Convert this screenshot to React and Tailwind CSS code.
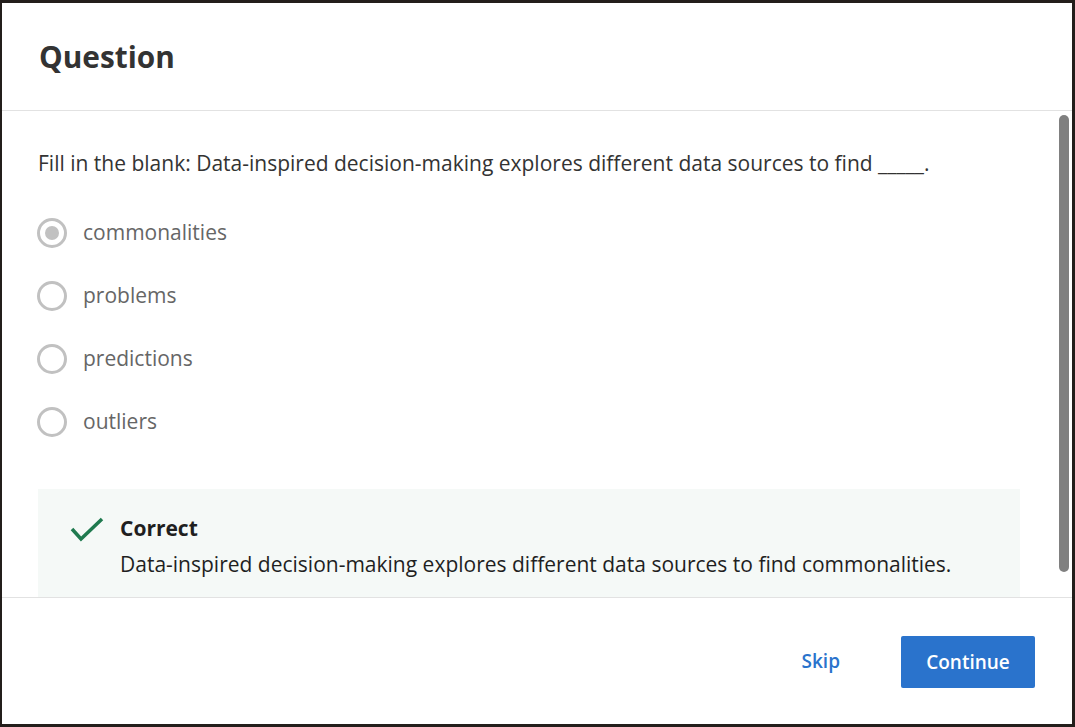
import React from "react";

const options = ["commonalities", "problems", "predictions", "outliers"];

export default function App() {
  return (
    <div
      className="w-[1075px] h-[727px] bg-[#231e1b] pt-[3px] pl-[2px] overflow-hidden"
      style={{ fontFamily: '"Open Sans", sans-serif' }}
    >
      <div className="w-[1070px] h-[721px] bg-white flex flex-col">
        <div className="h-[108px] shrink-0 border-b border-[#e2e2e2] flex items-center pl-[37px]">
          <h1 className="text-[29.8px] font-bold text-[#333333] leading-none">Question</h1>
        </div>
        <div className="relative flex-1 overflow-hidden">
          <div className="pl-[36px] pt-[37px]">
            <p className="text-[21px] leading-[30px] text-[#333333]">
              Fill in the blank: Data-inspired decision-making explores different data sources to find _____.
            </p>
            <div className="mt-[23px] flex flex-col">
              {options.map((o, i) => (
                <div key={o} className="h-[63px] flex items-center">
                  <div className="ml-[-1px] w-[30px] h-[30px] rounded-full border-[3px] border-[#c1c1c1] flex items-center justify-center">
                    {i === 0 && <div className="w-[14px] h-[14px] rounded-full bg-[#c1c1c1]" />}
                  </div>
                  <span className="ml-[16px] text-[21px] text-[#666666] leading-none">{o}</span>
                </div>
              ))}
            </div>
            <div className="mt-[36px] w-[982px] bg-[#f5f9f7] pt-[26px] pb-[30px] pl-[32px] flex">
              <svg width="34" height="26" viewBox="0 0 34 26" className="mt-[2px]">
                <path d="M2 12 L11 22 L32 2" fill="none" stroke="#1f7a4f" strokeWidth="3.5" />
              </svg>
              <div className="ml-[16px]">
                <div className="text-[21px] font-bold text-[#1f1f1f] leading-[26px]">Correct</div>
                <div className="mt-[10px] text-[21px] text-[#1f1f1f] leading-[26px]">
                  Data-inspired decision-making explores different data sources to find commonalities.
                </div>
              </div>
            </div>
          </div>
          <div className="absolute right-[3px] top-[4px] w-[10px] h-[457px] rounded-full bg-[#808080]" />
        </div>
        <div className="h-[127px] shrink-0 border-t border-[#e2e2e2] flex items-center justify-end pr-[37px]">
          <button className="text-[#2a73cc] text-[19px] font-semibold px-[16px] h-[52px] mr-[45px]">Skip</button>
          <button className="bg-[#2a73cc] text-white text-[19px] font-semibold w-[134px] h-[52px] rounded-[2px] mt-[2px]">
            Continue
          </button>
        </div>
      </div>
    </div>
  );
}
